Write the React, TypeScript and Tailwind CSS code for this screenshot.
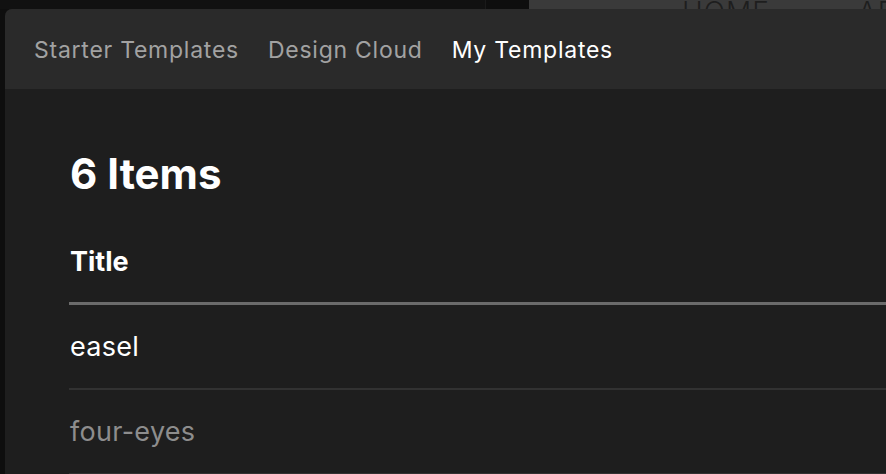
import { Fragment } from 'react'

const tabs = [
    { label: 'Starter Templates', active: false },
    { label: 'Design Cloud', active: false },
    { label: 'My Templates', active: true },
]

const items = [
    { title: 'easel', dim: false },
    { title: 'four-eyes', dim: true },
]

const BackPage = () => {
    return (
        <div className="flex h-[9px] overflow-hidden">
            <div className="w-[486px] bg-[#111111] border-r border-[#1a1a1a]" />
            <div className="w-[43px] bg-[#0e0e0e]" />
            <div className="flex-1 bg-[#3a3a3a] flex items-end overflow-hidden">
                <div className="flex gap-[88px] ml-[153px] -mb-[17px] text-[28px] font-light tracking-[1px] text-[#1e1e1e] leading-none">
                    <span>HOME</span>
                    <span>ABOUT</span>
                </div>
            </div>
        </div>
    )
}

const App = () => {
    return (
        <div className="w-[886px] h-[474px] overflow-hidden bg-[#0e0e0e] flex flex-col" style={{ fontFamily: 'Inter, "Noto Sans", sans-serif' }}>
            <BackPage />
            <div className="flex-1 ml-[5px] rounded-tl-[7px] overflow-hidden bg-[#1e1e1e] flex flex-col">
                <div className="h-[80px] bg-[#2a2a2a] flex items-center gap-[29px] pl-[29px] pt-[2px] shrink-0">
                    {tabs.map((t) => (
                        <span key={t.label} className={`text-[23px] tracking-[0.75px] ${t.active ? 'text-white' : 'text-[#a2a2a2]'}`}>
                            {t.label}
                        </span>
                    ))}
                </div>
                <div className="pl-[64px] pt-[59px]">
                    <h1 className="text-[42px] leading-[52px] font-bold text-white pl-[1px]">6 Items</h1>
                    <div className="mt-[46px] pb-[24px] border-b-[3px] border-[#6b6b6b]">
                        <span className="block text-[27px] leading-[32px] font-bold text-white pl-[1px]">Title</span>
                    </div>
                    {items.map((item) => (
                        <Fragment key={item.title}>
                            <div className="h-[85px] pt-[2px] flex items-center border-b-2 border-[#323232]">
                                <span className={`text-[27px] tracking-[0.3px] pl-[1px] ${item.dim ? 'text-[#8d8d8d]' : 'text-white'}`}>{item.title}</span>
                            </div>
                        </Fragment>
                    ))}
                </div>
            </div>
        </div>
    )
}

export default App
